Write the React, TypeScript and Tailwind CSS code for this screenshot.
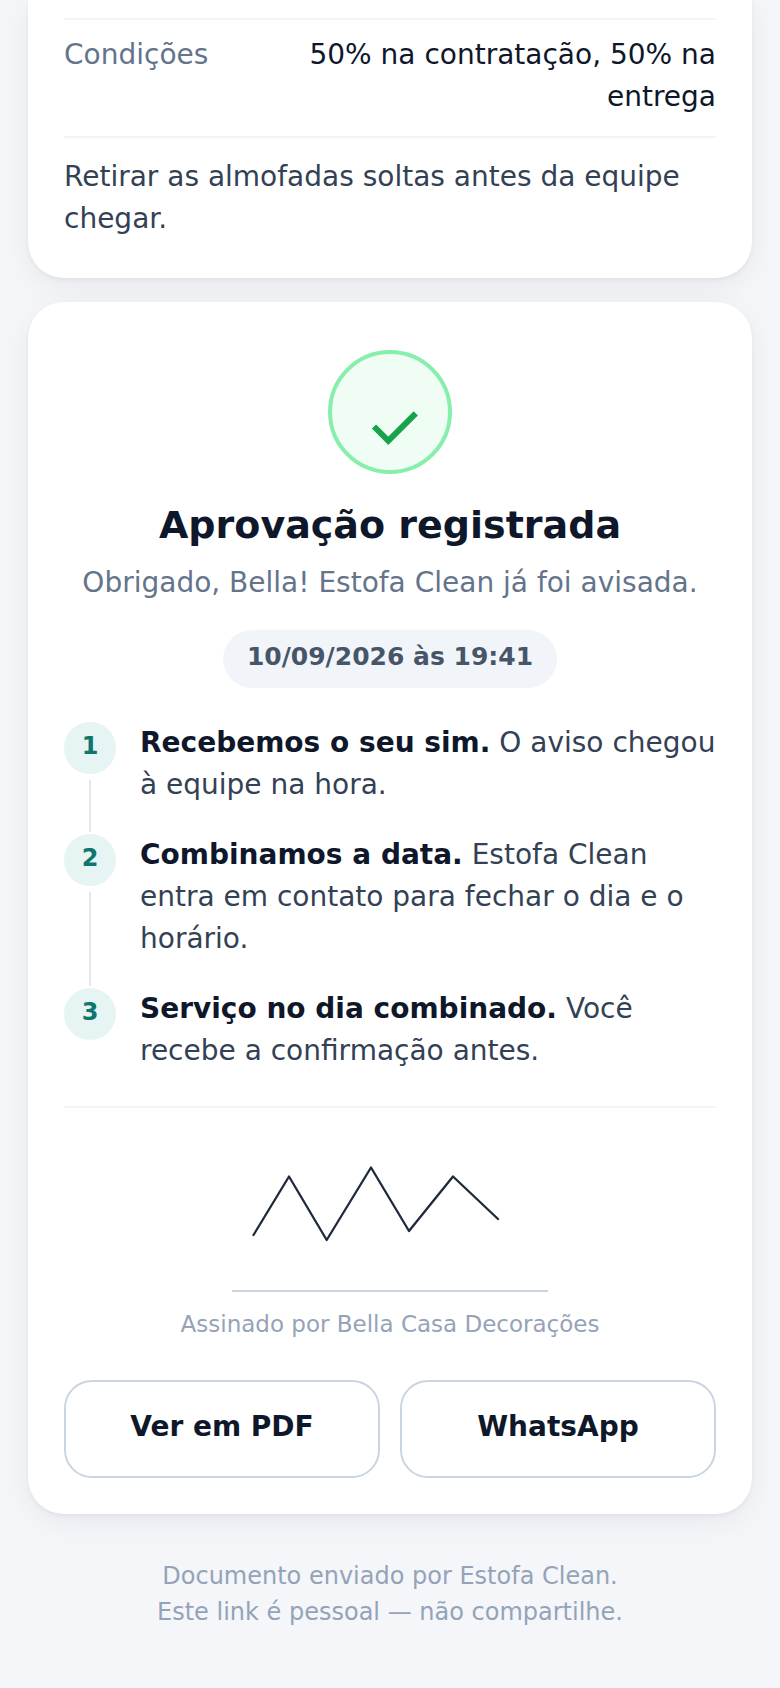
import type { ReactNode } from "react";

interface Step {
  title: string;
  text: string;
}

const steps: Step[] = [
  { title: "Recebemos o seu sim.", text: "O aviso chegou à equipe na hora." },
  {
    title: "Combinamos a data.",
    text: "Estofa Clean entra em contato para fechar o dia e o horário.",
  },
  {
    title: "Serviço no dia combinado.",
    text: "Você recebe a confirmação antes.",
  },
];

const Card = ({
  className,
  children,
}: {
  className: string;
  children: ReactNode;
}) => (
  <section
    className={`bg-white px-9 shadow-[0_2px_4px_rgba(15,23,42,0.05),0_8px_32px_rgba(15,23,42,0.06)] ${className}`}
  >
    {children}
  </section>
);

const ActionButton = ({ children }: { children: ReactNode }) => (
  <button
    type="button"
    className="flex-1 rounded-[28px] border-2 border-[#cbd5e1] bg-white pt-6 pb-7 font-bold text-[#0f172a]"
  >
    {children}
  </button>
);

const ApprovedIcon = () => (
  <svg className="size-[124px]" viewBox="0 0 124 124" fill="none">
    <circle cx="62" cy="62" r="60" fill="#f0fdf4" stroke="#86efac" strokeWidth="4" />
    <path d="M46 76.5L60.3 90.8L87.8 63.3" stroke="#16a34a" strokeWidth="6" />
  </svg>
);

const Signature = () => (
  <svg
    className="h-[146px] w-[316px]"
    viewBox="0 0 316 146"
    fill="none"
    role="img"
    aria-label="Assinatura"
  >
    <path
      d="M21.5 91L57 32.5L94.7 96L139 23.5L177 87L221 32.5L266 75"
      stroke="#1e293b"
      strokeWidth="2.3"
      strokeLinecap="round"
      strokeLinejoin="round"
    />
  </svg>
);

const App = () => {
  return (
    <main className="min-h-screen bg-[#f4f6fa] px-7 pb-12 font-['DejaVu_Sans',sans-serif] text-[28px] leading-[42px] text-[#334155]">
      {/* Conditions */}
      <Card className="rounded-b-[36px] pt-[18px] pb-[38px]">
        <dl className="flex justify-between gap-6 border-y-2 border-[#f1f5f9] pt-3.5 pb-[18px]">
          <dt className="text-[#64748b]">Condições</dt>
          <dd className="max-w-[440px] text-right text-[#0f172a]">
            50% na contratação, 50% na entrega
          </dd>
        </dl>
        <p className="pt-[18px]">
          Retirar as almofadas soltas antes da equipe chegar.
        </p>
      </Card>

      {/* Approval */}
      <Card className="mt-6 rounded-[36px] pt-12 pb-9">
        <div className="flex flex-col items-center text-center">
          <ApprovedIcon />
          <h1 className="mt-[26px] text-[38px] leading-[50px] font-bold text-[#0f172a]">
            Aprovação registrada
          </h1>
          <p className="mt-3 text-[#64748b]">
            Obrigado, Bella! Estofa Clean já foi avisada.
          </p>
          <p className="mt-[26px] rounded-full bg-[#f1f5f9] px-6 pt-2 pb-3 text-[25px] leading-[38px] font-bold text-[#475569]">
            10/09/2026 às 19:41
          </p>
        </div>

        <ol className="mt-[34px]">
          {steps.map((step, index) => (
            <li key={step.title} className="flex gap-6">
              <div className="flex flex-col items-center">
                <span className="size-13 rounded-full bg-[#e6f5f3] text-center text-2xl leading-12 font-bold text-[#0f766e]">
                  {index + 1}
                </span>
                {index < steps.length - 1 && (
                  <span className="mt-1.5 mb-0.5 w-0.5 flex-1 bg-[#e2e8f0]" />
                )}
              </div>
              <p className={index < steps.length - 1 ? "flex-1 pb-7" : "flex-1"}>
                <strong className="font-bold text-[#0f172a]">{step.title}</strong>{" "}
                {step.text}
              </p>
            </li>
          ))}
        </ol>

        {/* Signature */}
        <figure className="mt-[34px] flex flex-col items-center border-t-2 border-[#f1f5f9] pt-9">
          <div className="border-b-2 border-[#cbd5e1]">
            <Signature />
          </div>
          <figcaption className="mt-3.5 text-[23px] leading-9 text-[#94a3b8]">
            Assinado por Bella Casa Decorações
          </figcaption>
        </figure>

        <div className="mt-[38px] flex gap-5">
          <ActionButton>Ver em PDF</ActionButton>
          <ActionButton>WhatsApp</ActionButton>
        </div>
      </Card>

      <footer className="mt-11 text-center text-2xl leading-9 text-[#94a3b8]">
        <p>Documento enviado por Estofa Clean.</p>
        <p>Este link é pessoal — não compartilhe.</p>
      </footer>
    </main>
  );
};

export default App;
